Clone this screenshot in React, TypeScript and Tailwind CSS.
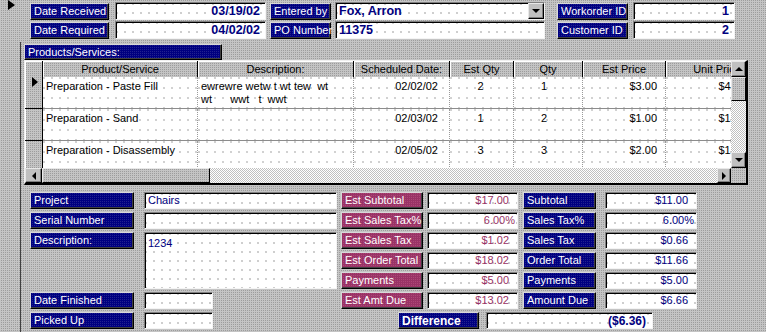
import React from "react";

const TEX = "bg-[conic-gradient(#9c9c9c_0_25%,#c4c4c4_0)] bg-[length:2px_2px]";
const BTN =
  "bg-[#c0c0c0] border border-t-[#e8e8e8] border-l-[#e8e8e8] border-b-black border-r-black shadow-[inset_-1px_-1px_0_#808080] flex items-center justify-center";
const CHECK = "bg-[repeating-conic-gradient(#ffffff_0_25%,#c0c0c0_0_50%)] bg-[length:2px_2px]";
const NAVY =
  "bg-[conic-gradient(#22228e_0_25%,#000080_0)] bg-[length:2px_2px] text-white border border-t-[#d8d8d8] border-l-[#d8d8d8] border-b-black border-r-black shadow-[inset_-1px_-1px_0_#404040] flex items-center pl-[3px] text-[11px] leading-none whitespace-nowrap";
const MAROON =
  "bg-[conic-gradient(#ad4777_0_25%,#993366_0)] bg-[length:2px_2px] text-white border border-t-[#d8d8d8] border-l-[#d8d8d8] border-b-black border-r-black shadow-[inset_-1px_-1px_0_#404040] flex items-center pl-[3px] text-[11px] leading-none whitespace-nowrap";
const FIELD =
  "bg-white bg-[radial-gradient(circle_at_1px_1px,#cdcdcd_0.7px,transparent_0.9px)] bg-[length:8px_9px] border border-t-[#808080] border-l-[#808080] border-b-[#f4f4f4] border-r-[#f4f4f4] shadow-[inset_1px_1px_0_#000] flex items-center text-[11px] leading-none whitespace-nowrap";
const HEAD =
  "shrink-0 h-full border-r border-r-black shadow-[inset_1px_1px_0_#ffffff] flex items-center justify-center text-[11px] text-black leading-none whitespace-nowrap";
const CELL =
  "shrink-0 h-full bg-white bg-[radial-gradient(circle_at_1px_1px,#d0d0d0_0.7px,transparent_0.9px)] bg-[length:8px_10px] border-r border-dotted border-r-[#9a9a9a] shadow-[inset_0_-1px_0_#8c8c8c] text-[11px] text-black leading-[13px] pt-[3px] whitespace-pre";

const rows = [
  {
    product: "Preparation - Paste Fill",
    desc: "ewrewre wetw t wt tew  wt\nwt      wwt   t  wwt",
    date: "02/02/02",
    estQty: "2",
    qty: "1",
    estPrice: "$3.00",
    unit: "$4.00",
  },
  { product: "Preparation - Sand", desc: "", date: "02/03/02", estQty: "1", qty: "2", estPrice: "$1.00", unit: "$1.00" },
  { product: "Preparation - Disassembly", desc: "", date: "02/05/02", estQty: "3", qty: "3", estPrice: "$2.00", unit: "$1.00" },
];

const totals = [
  ["Est Subtotal", "$17.00", "Subtotal", "$11.00"],
  ["Est Sales Tax%", "6.00%", "Sales Tax%", "6.00%"],
  ["Est Sales Tax", "$1.02", "Sales Tax", "$0.66"],
  ["Est Order Total", "$18.02", "Order Total", "$11.66"],
  ["Payments", "$5.00", "Payments", "$5.00"],
  ["Est Amt Due", "$13.02", "Amount Due", "$6.66"],
];

function UpArrow() {
  return <div className="w-0 h-0 border-x-[4px] border-x-transparent border-b-[4px] border-b-black" />;
}
function DownArrow() {
  return <div className="w-0 h-0 border-x-[4px] border-x-transparent border-t-[4px] border-t-black" />;
}
function LeftArrow() {
  return <div className="w-0 h-0 border-y-[4px] border-y-transparent border-r-[4px] border-r-black" />;
}
function RightArrow() {
  return <div className="w-0 h-0 border-y-[4px] border-y-transparent border-l-[4px] border-l-black" />;
}

function Subform() {
  return (
    <div className="w-[724px] h-[125px] flex flex-col border-t border-l border-t-[#f0f0f0] border-l-[#f0f0f0] border-r-2 border-b-2 border-r-black border-b-black">
      <div className="flex h-[107px]">
        <div className="flex-1 overflow-hidden flex flex-col">
          {/* header */}
          <div className={`flex h-[16px] shrink-0 ${TEX}`}>
            <div className={`${HEAD} w-[18px]`} />
            <div className={`${HEAD} w-[155px]`}>Product/Service</div>
            <div className={`${HEAD} w-[156px]`}>Description:</div>
            <div className={`${HEAD} w-[96px]`}>Scheduled Date:</div>
            <div className={`${HEAD} w-[64px]`}>Est Qty</div>
            <div className={`${HEAD} w-[69px]`}>Qty</div>
            <div className={`${HEAD} w-[83px]`}>Est Price</div>
            <div className={`${HEAD} w-[85px] pl-[18px]`}>Unit Price</div>
          </div>
          {rows.map((r, i) => (
            <div key={i} className="flex h-[32px] shrink-0">
              <div className={`shrink-0 w-[18px] h-full ${TEX} border-r border-r-black shadow-[inset_0_-1px_0_#000000,inset_1px_0_0_#ffffff] pl-[7px]`}>
                {i === 0 && (
                  <div className="w-0 h-0 border-y-[5px] border-y-transparent border-l-[6px] border-l-black" />
                )}
              </div>
              <div className={`${CELL} w-[155px] pl-[3px]`}>{r.product}</div>
              <div className={`${CELL} w-[156px] pl-[3px]`}>{r.desc}</div>
              <div className={`${CELL} w-[96px] text-right pr-[11px]`}>{r.date}</div>
              <div className={`${CELL} w-[64px] text-center pr-[2px]`}>{r.estQty}</div>
              <div className={`${CELL} w-[69px] text-center pr-[8px]`}>{r.qty}</div>
              <div className={`${CELL} w-[83px] text-right pr-[8px]`}>{r.estPrice}</div>
              <div className={`${CELL} w-[85px] text-right pr-[4px]`}>{r.unit}</div>
            </div>
          ))}
        </div>
        {/* vertical scrollbar */}
        <div className="w-[15px] shrink-0 flex flex-col">
          <div className={`${BTN} h-[16px] shrink-0`}>
            <UpArrow />
          </div>
          <div className={`${TEX} h-[24px] shrink-0 border border-t-[#e8e8e8] border-l-[#e8e8e8] border-b-black border-r-black`} />
          <div className={`flex-1 ${CHECK}`} />
          <div className={`${BTN} h-[16px] shrink-0`}>
            <DownArrow />
          </div>
        </div>
      </div>
      {/* horizontal scrollbar */}
      <div className="flex h-[15px] shrink-0">
        <div className={`${BTN} w-[17px] shrink-0`}>
          <LeftArrow />
        </div>
        <div className={`${TEX} w-[168px] shrink-0 border border-t-[#e8e8e8] border-l-[#e8e8e8] border-b-black border-r-black`} />
        <div className={`flex-1 ${CHECK}`} />
        <div className={`${BTN} w-[14px] shrink-0`}>
          <RightArrow />
        </div>
        <div className={`${TEX} w-[15px] shrink-0`} />
      </div>
    </div>
  );
}

export default function App() {
  return (
    <div className={`w-[766px] h-[332px] overflow-hidden flex ${TEX} font-['Liberation_Sans',Arial,sans-serif]`}>
      {/* record selector strip */}
      <div className="w-[21px] shrink-0 flex flex-col">
        <div className="h-[42px] shrink-0 pl-[8px]">
          <div className="w-0 h-0 border-y-[5px] border-y-transparent border-l-[7px] border-l-black" />
        </div>
        <div className="flex-1 border-r border-r-[#404040]" />
      </div>

      <div className="flex-1 flex flex-col">
        {/* header fields */}
        <div className="flex flex-col gap-[1px] pt-[2px] pl-[9px]">
          <div className="flex h-[18px] items-center">
            <div className={`${NAVY} w-[79px] h-[17px]`}>Date Received</div>
            <div className={`${FIELD} w-[151px] h-[18px] ml-[6px] justify-end pr-[5px] font-bold text-[12.5px] text-[#000080]`}>03/19/02</div>
            <div className={`${NAVY} w-[61px] h-[17px] ml-[4px]`}>Entered by</div>
            <div className={`${FIELD} w-[210px] h-[18px] ml-[4px] font-bold text-[12.5px] text-[#000080] pl-[3px]`}>
              <span className="flex-1">Fox, Arron</span>
              <div className={`${BTN} w-[16px] h-[16px] shrink-0`}>
                <DownArrow />
              </div>
            </div>
            <div className={`${NAVY} w-[71px] h-[17px] ml-[12px]`}>Workorder ID</div>
            <div className={`${FIELD} w-[102px] h-[18px] ml-[5px] justify-end pr-[5px] font-bold text-[12.5px] text-[#000080]`}>1</div>
          </div>
          <div className="flex h-[18px] items-center">
            <div className={`${NAVY} w-[79px] h-[17px]`}>Date Required</div>
            <div className={`${FIELD} w-[151px] h-[18px] ml-[6px] justify-end pr-[5px] font-bold text-[12.5px] text-[#000080]`}>04/02/02</div>
            <div className={`${NAVY} w-[61px] h-[17px] ml-[4px]`}>PO Number</div>
            <div className={`${FIELD} w-[210px] h-[18px] ml-[4px] font-bold text-[12.5px] text-[#000080] pl-[3px]`}>11375</div>
            <div className={`${NAVY} w-[71px] h-[17px] ml-[12px]`}>Customer ID</div>
            <div className={`${FIELD} w-[102px] h-[18px] ml-[5px] justify-end pr-[5px] font-bold text-[12.5px] text-[#000080]`}>2</div>
          </div>
        </div>

        {/* products subform */}
        <div className="ml-[3px] mt-[5px] flex flex-col">
          <div className={`${NAVY} w-[198px] h-[16px]`}>Products/Services:</div>
          <Subform />
        </div>

        {/* bottom section */}
        <div className="flex pl-[9px] mt-[7px]">
          <div className="w-[307px] shrink-0 flex flex-col gap-[3px]">
            <div className="flex h-[17px]">
              <div className={`${NAVY} w-[104px] h-[17px]`}>Project</div>
              <div className={`${FIELD} w-[193px] h-[17px] ml-[10px] pl-[3px] text-[#000080]`}>Chairs</div>
            </div>
            <div className="flex h-[17px]">
              <div className={`${NAVY} w-[104px] h-[17px]`}>Serial Number</div>
              <div className={`${FIELD} w-[193px] h-[17px] ml-[10px]`} />
            </div>
            <div className="flex h-[57px] items-start">
              <div className={`${NAVY} w-[104px] h-[17px]`}>Description:</div>
              <div className={`${FIELD} w-[193px] h-[57px] ml-[10px] pl-[3px] pt-[5px] items-start text-[#000080]`}>1234</div>
            </div>
            <div className="flex h-[17px]">
              <div className={`${NAVY} w-[104px] h-[17px]`}>Date Finished</div>
              <div className={`${FIELD} w-[69px] h-[17px] ml-[10px]`} />
            </div>
            <div className="flex h-[17px]">
              <div className={`${NAVY} w-[104px] h-[17px]`}>Picked Up</div>
              <div className={`${FIELD} w-[69px] h-[17px] ml-[10px]`} />
            </div>
          </div>

          <div className="ml-[4px] flex flex-col gap-[3px]">
            {totals.map(([el, ev, l, v]) => (
              <div key={el} className="flex h-[17px]">
                <div className={`${MAROON} w-[82px] h-[17px]`}>{el}</div>
                <div className={`${FIELD} w-[91px] h-[17px] ml-[4px] justify-end text-[#993366] ${ev.endsWith("%") ? "pr-[2px]" : "pr-[8px]"}`}>{ev}</div>
                <div className={`${NAVY} w-[73px] h-[17px] ml-[5px]`}>{l}</div>
                <div className={`${FIELD} w-[92px] h-[17px] ml-[9px] justify-end text-[#000080] ${v.endsWith("%") ? "pr-[2px]" : "pr-[8px]"}`}>{v}</div>
              </div>
            ))}
            <div className="flex h-[17px] ml-[57px]">
              <div className={`${NAVY} w-[81px] h-[17px] font-bold text-[12px]`}>Difference</div>
              <div className={`${FIELD} w-[167px] h-[17px] ml-[7px] justify-end pr-[6px] font-bold text-[12px] text-[#000080]`}>($6.36)</div>
            </div>
          </div>
        </div>
      </div>
    </div>
  );
}
